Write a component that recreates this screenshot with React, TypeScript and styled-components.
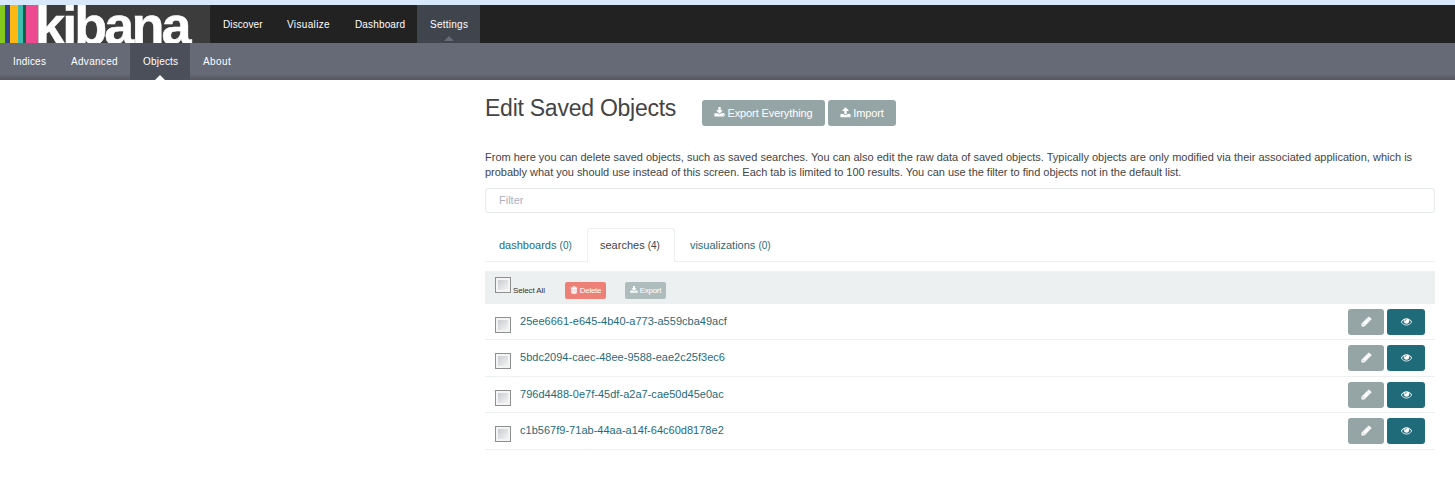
import React from "react";
import styled, { createGlobalStyle } from "styled-components";

const Global = createGlobalStyle`
  * { box-sizing: border-box; }
  body { margin: 0; background: #fff; color: #444; font: 11px/15px "Liberation Sans", Arial, sans-serif; overflow: hidden; }
`;

const Page = styled.div`
  height: 478px;
  border-top: 5px solid #d6e8f9;
`;

const TopBar = styled.header`
  display: flex;
  height: 38px;
  background: #222;
`;

const Logo = styled.div`
  display: flex;
  width: 210px;
  height: 38px;
  overflow: hidden;
  background: #3c3c3c;
`;

const Stripe = styled.i<{ $w: number; $c: string }>`
  flex: none;
  width: ${(p) => p.$w}px;
  background: ${(p) => p.$c};
`;

const Wordmark = styled.span`
  color: #fff;
  font-weight: bold;
  font-size: 54px;
  line-height: 41px;
  letter-spacing: -2.9px;
  margin-left: -3px;
  -webkit-text-stroke: 0.5px #fff;
`;

const NavItem = styled.a<{ $w: number; $ls?: number; $bg?: string; $arrow?: string }>`
  position: relative;
  display: flex;
  align-items: center;
  width: ${(p) => p.$w}px;
  padding-left: 13px;
  color: #fff;
  font-size: 10px;
  white-space: nowrap;
  letter-spacing: ${(p) => p.$ls || 0}px;
  background: ${(p) => p.$bg || "transparent"};
  &::after {
    content: "";
    display: ${(p) => (p.$arrow ? "block" : "none")};
    position: absolute;
    bottom: ${(p) => (p.$arrow === "#fff" ? 0 : 2)}px;
    left: 50%;
    margin-left: -5px;
    border: 5px solid transparent;
    border-top: 0;
    border-bottom-color: ${(p) => p.$arrow || "transparent"};
  }
`;

const SubBar = styled.nav`
  display: flex;
  height: 37px;
  background: linear-gradient(#656a76 0, #656a76 31px, #54575f 37px);
`;

const Content = styled.main`
  width: 950px;
  margin-left: 485px;
`;

const Heading = styled.div`
  display: flex;
  align-items: flex-start;
  height: 70px;
  padding-top: 20px;
`;

const Title = styled.h1`
  width: 217px;
  margin: -4px 0 0;
  font-size: 23px;
  line-height: 25px;
  font-weight: normal;
  letter-spacing: -0.25px;
`;

const Button = styled.button<{ $w: number; $bg?: string; $small?: boolean }>`
  display: flex;
  align-items: center;
  justify-content: center;
  gap: 2px;
  width: ${(p) => p.$w}px;
  height: ${(p) => (p.$small ? 17 : 26)}px;
  margin-right: 3px;
  padding: 0 0 1px;
  border: 0;
  border-radius: ${(p) => (p.$small ? 2 : 3)}px;
  color: #fff;
  background: ${(p) => p.$bg || "#95a5a6"};
  font: ${(p) => (p.$small ? 8 : 11)}px "Liberation Sans", Arial, sans-serif;
  letter-spacing: ${(p) => (p.$small ? -0.3 : -0.1)}px;
  white-space: nowrap;
`;

const Intro = styled.p`
  margin: 0 0 8px;
  color: #444;
  white-space: nowrap;
`;

const IntroLine = styled.span<{ $ls: number }>`
  display: block;
  letter-spacing: ${(p) => p.$ls}px;
`;

const Filter = styled.input`
  display: block;
  width: 100%;
  height: 25px;
  padding: 0 13px 2px;
  border: 1px solid #e6eaea;
  border-radius: 3px;
  font: 11px "Liberation Sans", Arial, sans-serif;
  &::placeholder { color: #acb0c6; opacity: 1; }
`;

const Tabs = styled.div`
  display: flex;
  height: 34px;
  margin-top: 15px;
  border-bottom: 1px solid #ecf0f1;
`;

const Tab = styled.a<{ $w: number; $active?: boolean }>`
  width: ${(p) => p.$w}px;
  height: 34px;
  padding: 9px 0 0 ${(p) => (p.$active ? 12 : 13)}px;
  border: 1px solid ${(p) => (p.$active ? "#ecf0f1" : "transparent")};
  border-bottom: 0;
  border-radius: 3px 3px 0 0;
  color: ${(p) => (p.$active ? "#444" : "#1f6b7a")};
  background: ${(p) => (p.$active ? "#fff" : "transparent")};
  white-space: nowrap;
  small { font-size: 10px; }
`;

const Tools = styled.div`
  display: flex;
  height: 33px;
  margin-top: 9px;
  padding: 6px 10px;
  background: #ecf0f1;
`;

const Check = styled.span`
  flex: none;
  width: 16px;
  height: 16px;
  padding: 2px;
  border: 1px solid #8e8f8f;
  background: linear-gradient(135deg, #c8cbd0, #f4f4f4) content-box, #f4f4f4;
`;

const SelectAll = styled.label`
  display: flex;
  width: 70px;
  color: #333;
  font-size: 8px;
  gap: 2px;
  white-space: nowrap;
  span:last-child { margin-top: 6px; letter-spacing: -0.1px; }
`;

const ToolButtons = styled.div`
  display: flex;
  gap: 16px;
  padding-top: 5px;
`;

const Row = styled.div<{ $h: number }>`
  display: flex;
  height: ${(p) => p.$h}px;
  padding: 5px 7px 0 10px;
  border-bottom: 1px solid #ecf0f1;
  ${Check} { margin-top: 8px; }
`;

const ObjectLink = styled.a`
  flex: 1;
  padding: 5px 0 0 9px;
  color: #1f6b7a;
  letter-spacing: 0.02px;
`;

const paths = {
  pencil: "M491 1536l91-91-235-235-91 91v107h128v128h107zm523-928q0-22-22-22-10 0-17 7l-542 542q-7 7-7 17 0 22 22 22 10 0 17-7l542-542q7-7 7-17zm-54-192l416 416-832 832h-416v-416zm683 96q0 53-37 90l-166 166-416-416 166-165q36-38 90-38 53 0 91 38l235 234q37 39 37 91z",
  eye: "M1664 960q-152-236-381-353 61 104 61 225 0 185-131.5 316.5t-316.5 131.5-316.5-131.5-131.5-316.5q0-121 61-225-229 117-381 353 133 205 333.5 326.5t434.5 121.5 434.5-121.5 333.5-326.5zm-720-384q0-20-14-34t-34-14q-125 0-214.5 89.5t-89.5 214.5q0 20 14 34t34 14 34-14 14-34q0-86 61-147t147-61q20 0 34-14t14-34zm848 384q0 34-20 69-140 230-376.5 368.5t-499.5 138.5-499.5-139-376.5-368q-20-35-20-69t20-69q140-229 376.5-368t499.5-139 499.5 139 376.5 368q20 35 20 69z",
  download: "M1344 1344q0-26-19-45t-45-19-45 19-19 45 19 45 45 19 45-19 19-45zm256 0q0-26-19-45t-45-19-45 19-19 45 19 45 45 19 45-19 19-45zm128-224v320q0 40-28 68t-68 28h-1472q-40 0-68-28t-28-68v-320q0-40 28-68t68-28h465l135 136q58 56 136 56t136-56l136-136h464q40 0 68 28t28 68zm-325-569q17 41-14 70l-448 448q-18 19-45 19t-45-19l-448-448q-31-29-14-70 17-39 59-39h256v-448q0-26 19-45t45-19h256q26 0 45 19t19 45v448h256q42 0 59 39z",
  upload: "M1344 1472q0-26-19-45t-45-19-45 19-19 45 19 45 45 19 45-19 19-45zm256 0q0-26-19-45t-45-19-45 19-19 45 19 45 45 19 45-19 19-45zm128-224v320q0 40-28 68t-68 28h-1472q-40 0-68-28t-28-68v-320q0-40 28-68t68-28h427q21 56 70.5 92t110.5 36h256q61 0 110.5-36t70.5-92h427q40 0 68 28t28 68zm-325-648q-17 40-59 40h-256v448q0 26-19 45t-45 19h-256q-26 0-45-19t-19-45v-448h-256q-42 0-59-40-17-39 14-69l448-448q18-19 45-19t45 19l448 448q31 30 14 69z",
  trash: "M704 1376v-704q0-14-9-23t-23-9h-64q-14 0-23 9t-9 23v704q0 14 9 23t23 9h64q14 0 23-9t9-23zm256 0v-704q0-14-9-23t-23-9h-64q-14 0-23 9t-9 23v704q0 14 9 23t23 9h64q14 0 23-9t9-23zm256 0v-704q0-14-9-23t-23-9h-64q-14 0-23 9t-9 23v704q0 14 9 23t23 9h64q14 0 23-9t9-23zm-544-992h448l-48-117q-7-9-17-11h-317q-10 2-17 11zm928 32v64q0 14-9 23t-23 9h-96v948q0 83-47 143.5t-113 60.5h-832q-66 0-113-58.5t-47-141.5v-952h-96q-14 0-23-9t-9-23v-64q0-14 9-23t23-9h309l70-167q15-37 54-63t79-26h320q40 0 79 26t54 63l70 167h309q14 0 23 9t9 23z",
};

const Glyph = styled.svg<{ $bold?: boolean }>`
  flex: none;
  overflow: visible;
  fill: currentColor;
  stroke: currentColor;
  stroke-width: ${(p) => (p.$bold ? 90 : 0)};
`;

const Icon = ({ name, size, bold }: { name: keyof typeof paths; size: number; bold?: boolean }) => (
  <Glyph width={size} height={size} viewBox="0 0 1792 1792" $bold={bold}>
    <path d={paths[name]} />
  </Glyph>
);

const stripes: [number, string][] = [
  [5, "#85c91f"], [5, "#2f418f"], [8, "#fdb813"], [5, "#3dbdb0"], [3, "#136149"], [12, "#ee4a92"],
];

const rows: [string, number][] = [
  ["25ee6661-e645-4b40-a773-a559cba49acf", 36],
  ["5bdc2094-caec-48ee-9588-eae2c25f3ec6", 37],
  ["796d4488-0e7f-45df-a2a7-cae50d45e0ac", 36],
  ["c1b567f9-71ab-44aa-a14f-64c60d8178e2", 37],
];

export default function App() {
  return (
    <Page>
      <Global />
      <TopBar>
        <Logo>
          {stripes.map(([w, c]) => <Stripe key={c} $w={w} $c={c} />)}
          <Wordmark>kibana</Wordmark>
        </Logo>
        <NavItem $w={64} $ls={0.1}>Discover</NavItem>
        <NavItem $w={68} $ls={0.35}>Visualize</NavItem>
        <NavItem $w={75} $ls={0.15}>Dashboard</NavItem>
        <NavItem $w={63} $ls={0.25} $bg="#40454d" $arrow="#656a76">Settings</NavItem>
      </TopBar>
      <SubBar>
        <NavItem $w={58} $ls={0.2}>Indices</NavItem>
        <NavItem $w={72} $ls={0.3}>Advanced</NavItem>
        <NavItem $w={60} $ls={0.2} $bg="#4b4f5a" $arrow="#fff">Objects</NavItem>
        <NavItem $w={60} $ls={0.4}>About</NavItem>
      </SubBar>
      <Content>
        <Heading>
          <Title>Edit Saved Objects</Title>
          <Button $w={123}><Icon name="download" size={11} />Export Everything</Button>
          <Button $w={68}><Icon name="upload" size={11} />Import</Button>
        </Heading>
        <Intro>
          <IntroLine $ls={0.005}>From here you can delete saved objects, such as saved searches. You can also edit the raw data of saved objects. Typically objects are only modified via their associated application, which is</IntroLine>
          <IntroLine $ls={-0.025}>probably what you should use instead of this screen. Each tab is limited to 100 results. You can use the filter to find objects not in the default list.</IntroLine>
        </Intro>
        <Filter placeholder="Filter" />
        <Tabs>
          <Tab $w={102}>dashboards <small>(0)</small></Tab>
          <Tab $w={88} $active>searches <small>(4)</small></Tab>
          <Tab $w={110}>&#8202;visualizations <small>(0)</small></Tab>
        </Tabs>
        <Tools>
          <SelectAll><Check /><span>Select All</span></SelectAll>
          <ToolButtons>
            <Button $w={41} $small $bg="#ed8177"><Icon name="trash" size={8} bold />Delete</Button>
            <Button $w={41} $small $bg="#afbcbd"><Icon name="download" size={8} />Export</Button>
          </ToolButtons>
        </Tools>
        {rows.map(([id, h]) => (
          <Row key={id} $h={h}>
            <Check />
            <ObjectLink>{id}</ObjectLink>
            <Button $w={36}><Icon name="pencil" size={11} bold /></Button>
            <Button $w={38} $bg="#1f6b7a"><Icon name="eye" size={11} /></Button>
          </Row>
        ))}
      </Content>
    </Page>
  );
}
